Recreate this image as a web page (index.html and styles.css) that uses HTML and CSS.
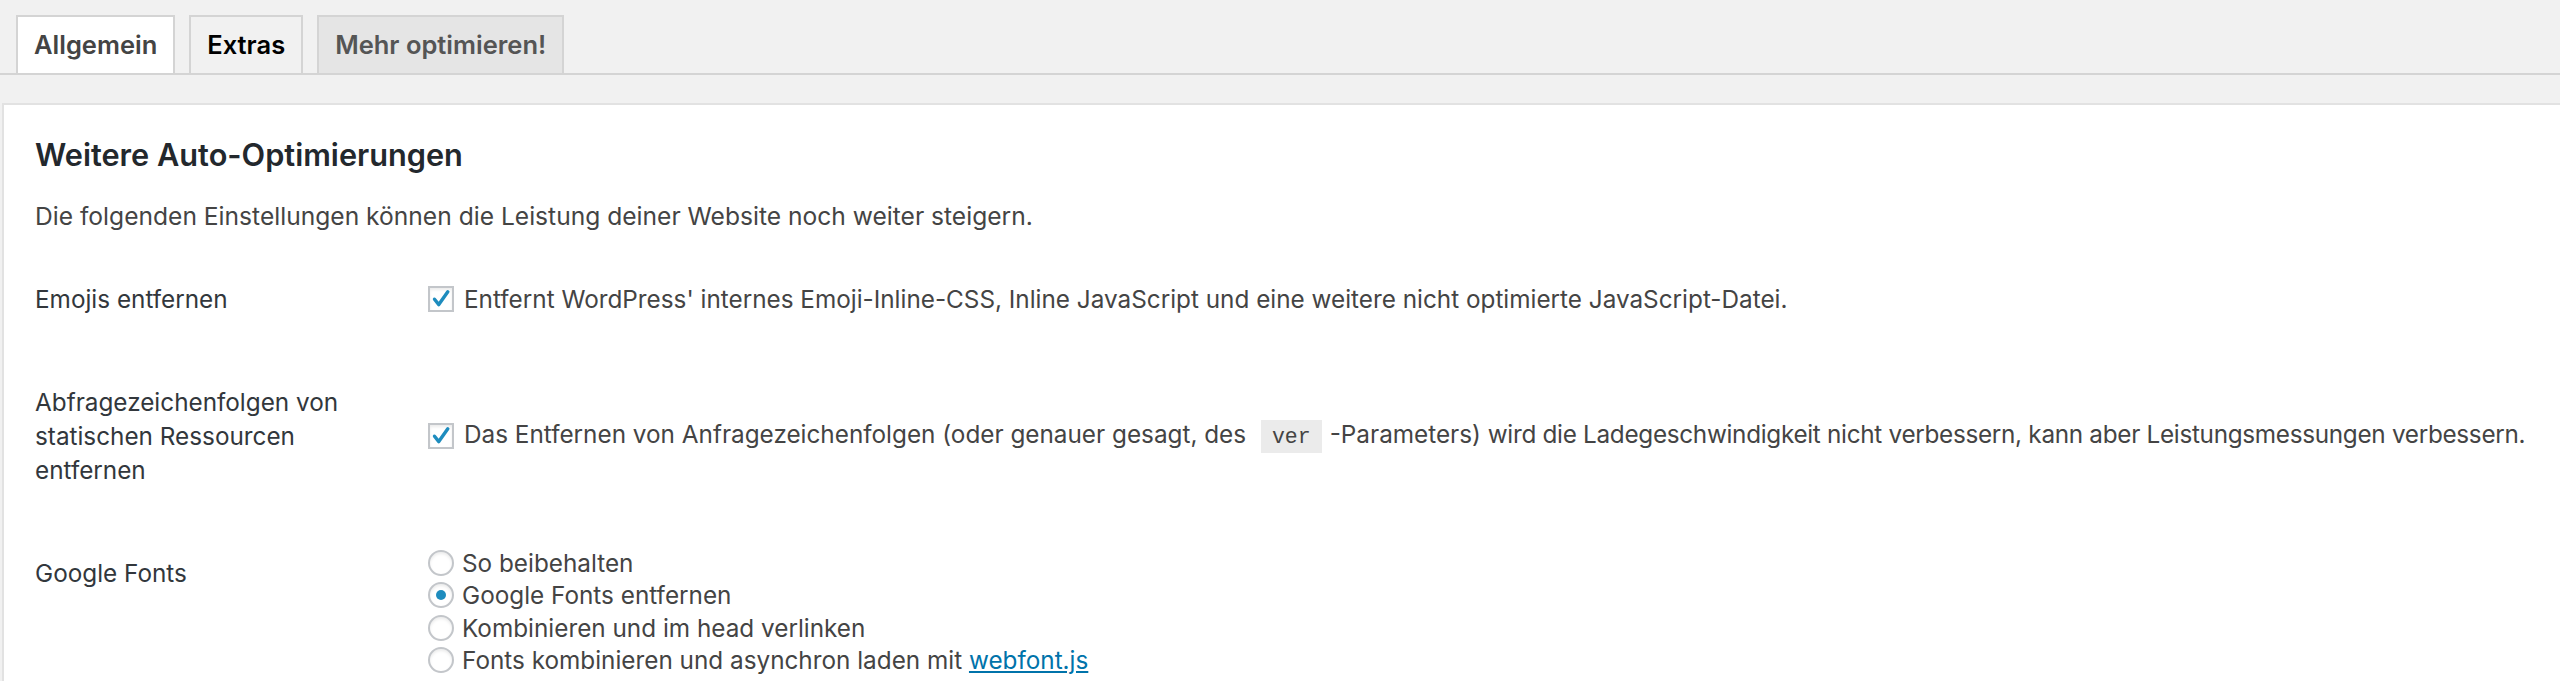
FILE: index.html
```html
<!DOCTYPE html>
<html lang="de">
<head>
<meta charset="utf-8">
<title>Autoptimize – Extras</title>
<link rel="stylesheet" href="styles.css">
</head>
<body>
<div class="wrap">
  <nav class="tabs">
    <a class="tab tab-hover">Allgemein</a>
    <a class="tab tab-active">Extras</a>
    <a class="tab">Mehr optimieren!</a>
  </nav>
  <section class="card">
    <h2 class="title">Weitere Auto-Optimierungen</h2>
    <p class="intro">Die folgenden Einstellungen können die Leistung deiner Website noch weiter steigern.</p>
    <div class="form">
      <div class="label">Emojis entfernen</div>
      <div class="field">
        <label class="opt">
          <span class="checkbox"><svg viewBox="0 0 26 26" width="26" height="26"><path d="M6.5 13.2 L10.8 18.6 L19.8 5.8" fill="none" stroke="#1e8cbe" stroke-width="3.4" stroke-linecap="round" stroke-linejoin="round"/></svg></span>
          Entfernt WordPress' internes Emoji-Inline-CSS, Inline JavaScript und eine weitere nicht optimierte JavaScript-Datei.
        </label>
      </div>

      <div class="label">Abfragezeichenfolgen von statischen Ressourcen entfernen</div>
      <div class="field">
        <label class="opt">
          <span class="checkbox"><svg viewBox="0 0 26 26" width="26" height="26"><path d="M6.5 13.2 L10.8 18.6 L19.8 5.8" fill="none" stroke="#1e8cbe" stroke-width="3.4" stroke-linecap="round" stroke-linejoin="round"/></svg></span>
          <span>Das Entfernen von Anfragezeichenfolgen (oder genauer gesagt, des <code class="code">ver</code>-Parameters) <span class="tight">wird die Ladegeschwindigkeit nicht verbessern, kann aber Leistungsmessungen verbessern.</span></span>
        </label>
      </div>

      <div class="label">Google Fonts</div>
      <div class="field field-top">
        <label class="radio-opt"><span class="radio"></span>So beibehalten</label>
        <label class="radio-opt"><span class="radio radio-on"></span>Google Fonts entfernen</label>
        <label class="radio-opt"><span class="radio"></span>Kombinieren und im head verlinken</label>
        <label class="radio-opt"><span class="radio"></span>Fonts kombinieren und asynchron laden mit&nbsp;<a class="link">webfont.js</a></label>
      </div>
    </div>
  </section>
</div>
</body>
</html>
```

FILE: styles.css
```css
html, body {
  margin: 0;
  padding: 0;
  background: #f1f1f1;
  overflow: hidden;
}

body {
  font-family: Inter, "Liberation Sans", Arial, sans-serif;
  color: #444;
  font-size: 24.3px;
}

.wrap {
  width: 2560px;
  height: 681px;
}

.tabs {
  display: flex;
  gap: 14px;
  padding: 15px 0 0 16px;
  border-bottom: 2px solid #d4d4d4;
  height: 58px;
}

.tab {
  box-sizing: border-box;
  height: 58px;
  padding: 0 16px;
  border: 2px solid #d4d4d4;
  border-bottom: none;
  background: #e5e5e5;
  color: #555;
  font-weight: 600;
  font-size: 25.5px;
  line-height: 56px;
  white-space: nowrap;
}

.tab-hover {
  background: #fff;
  color: #444;
}

.tab-active {
  background: #f1f1f1;
  color: #000;
}

.card {
  margin: 28px 0 0 2px;
  width: 2640px;
  height: 700px;
  box-sizing: border-box;
  background: #fff;
  border: 2px solid #e2e2e2;
  padding: 32px 0 0 31px;
}

.title {
  margin: 0;
  font-size: 30.7px;
  font-weight: 600;
  line-height: 36px;
  color: #23282d;
}

.intro {
  margin: 26px 0 0;
  font-size: 24.6px;
  line-height: 34px;
}

.form {
  display: grid;
  grid-template-columns: 393px 1fr;
  margin-top: 14px;
}

.label {
  padding: 34.5px 63px 34.5px 0;
  line-height: 34px;
  color: #32373c;
}

.field {
  align-self: center;
}

.field-top {
  align-self: start;
  padding-top: 26px;
}

.opt {
  display: flex;
  align-items: center;
  line-height: 34px;
  white-space: nowrap;
}

.tight {
  letter-spacing: -0.3px;
}

.checkbox {
  flex: none;
  box-sizing: border-box;
  width: 26px;
  height: 26px;
  margin-right: 10px;
  border: 2px solid #c3c6ca;
  background: #fff;
  box-shadow: inset 0 2px 3px rgba(0, 0, 0, 0.08);
  position: relative;
}

.checkbox svg {
  position: absolute;
  left: -2px;
  top: -2px;
}

.code {
  font-family: "Liberation Mono", "DejaVu Sans Mono", monospace;
  font-size: 21.5px;
  background: #ebebeb;
  padding: 5px 11px 4px;
  margin: 0 8px 0 8px;
}

.radio-opt {
  display: flex;
  align-items: center;
  height: 32.3px;
  white-space: nowrap;
}

.radio {
  flex: none;
  box-sizing: border-box;
  width: 26px;
  height: 26px;
  margin-right: 8px;
  border: 2px solid #c3c6ca;
  border-radius: 50%;
  background: #fff;
  box-shadow: inset 0 2px 3px rgba(0, 0, 0, 0.08);
  display: flex;
  align-items: center;
  justify-content: center;
}

.radio-on::after {
  content: "";
  width: 10px;
  height: 10px;
  border-radius: 50%;
  background: #1e8cbe;
}

.link {
  color: #0073aa;
  text-decoration: underline;
}
```
